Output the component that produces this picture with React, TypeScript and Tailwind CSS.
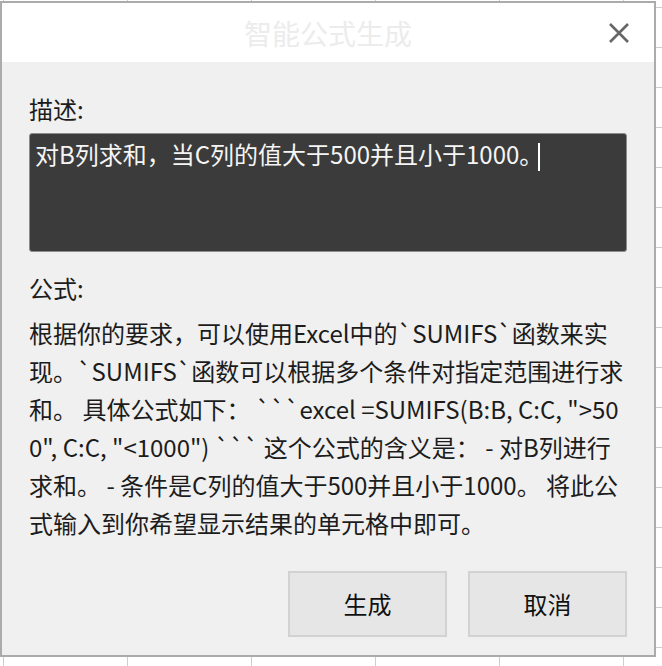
export default function App() {
  const answer =
    '根据你的要求，可以使用Excel中的`SUMIFS`函数来实现。`SUMIFS`函数可以根据多个条件对指定范围进行求和。 具体公式如下： ```excel =SUMIFS(B:B, C:C, ">500", C:C, "<1000") ``` 这个公式的含义是： - 对B列进行求和。 - 条件是C列的值大于500并且小于1000。 将此公式输入到你希望显示结果的单元格中即可。';

  return (
    <div
      className="relative w-[662px] h-[666px] overflow-hidden bg-white bg-[linear-gradient(to_right,#cdcdcd_1px,transparent_1px),linear-gradient(to_bottom,#cdcdcd_1px,transparent_1px)] bg-[size:124px_40px] bg-[position:3px_7px]"
      style={{ fontFamily: '"Noto Sans CJK SC", "Noto Sans", sans-serif' }}
    >
      {/* dialog sits on top of the sheet */}
      <div className="absolute left-0 top-[1px] w-[656px] h-[656px] border-2 border-[#ababab] bg-[#f0f0f0] flex flex-col">
        <div className="relative h-[59px] bg-white flex items-center justify-center">
          <span className="text-[28px] text-[#ececec] leading-none">智能公式生成</span>
          <button className="absolute right-[25px] top-[20px] w-[20px] h-[20px]">
            <svg viewBox="0 0 20 20" className="w-[20px] h-[20px]" fill="none" stroke="#666" strokeWidth={2.6}>
              <path d="M1 1L19 19M19 1L1 19" />
            </svg>
          </button>
        </div>

        <div className="flex-1 flex flex-col px-[27px] pt-[28px] pb-[18px] text-[24px] leading-[38px] text-[#1c1c1c]">
          <div>描述:</div>
          <div className="mt-[5px] h-[119px] rounded-[3px] border border-[#8c8c8c] bg-[#3b3b3b] px-[5px] pt-[4px] text-[#f5f5f5] leading-[32px]">
            对B列求和，当C列的值大于500并且小于1000。
            <span className="inline-block w-[2px] h-[28px] bg-white align-middle ml-[-5px]" />
          </div>

          <div className="mt-[17px]">公式:</div>
          <p className="mt-[7px] break-all">{answer}</p>

          <div className="mt-auto flex justify-end gap-[21px]">
            <button className="w-[159px] h-[66px] border-2 border-[#d2d2d2] bg-[#e6e6e6] text-[24px] text-[#111]">
              生成
            </button>
            <button className="w-[159px] h-[66px] border-2 border-[#d2d2d2] bg-[#e6e6e6] text-[24px] text-[#111]">
              取消
            </button>
          </div>
        </div>
      </div>
    </div>
  );
}
